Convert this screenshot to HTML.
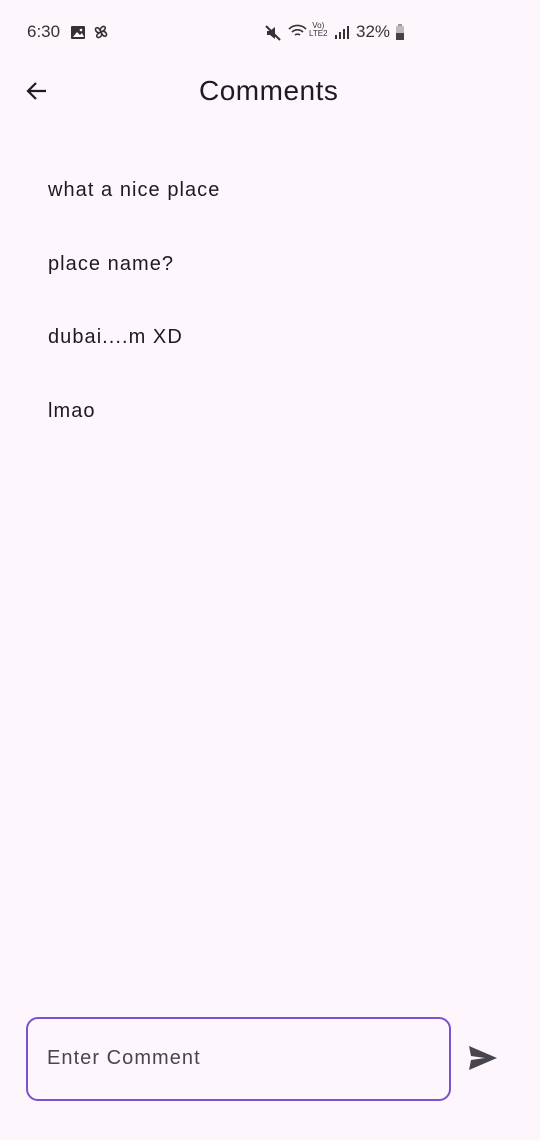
<!DOCTYPE html>
<html><head><meta charset="utf-8"><style>
body{margin:0;width:540px;height:1140px;background:#fdf6fc;font-family:"Liberation Sans",sans-serif;position:relative;overflow:hidden;color:#1d1b20}
.t{position:absolute;white-space:nowrap}
.c{font-size:20px;letter-spacing:1.05px}
</style></head><body>
<div class="t" style="left:27px;top:22px;font-size:17px;color:#333">6:30</div>
<svg class="t" style="left:70px;top:25px" width="16" height="15"><rect x="1" y="1" width="14" height="13" rx="1" fill="#333"/><path d="M3 12l4-5 3 3 2-2 2 4z" fill="#fff"/><circle cx="11" cy="5" r="1.3" fill="#fff"/></svg>
<svg class="t" style="left:92px;top:23px" width="18" height="18" fill="none" stroke="#333" stroke-width="1.6"><path d="M9 9C6 2 2 5 4 8s5 1 5 1zM9 9c7-3 4-7 1-5s-1 5-1 5zM9 9c3 7 7 4 5 1s-5-1-5-1zM9 9c-7 3-4 7-1 5s1-5 1-5z"/></svg>
<svg class="t" style="left:264px;top:24px" width="18" height="18"><path d="M3 7h3l5-4v12l-5-4H3z" fill="#333"/><path d="M2 2l14 14" stroke="#333" stroke-width="2"/></svg>
<svg class="t" style="left:288px;top:24px" width="20" height="16" fill="none" stroke="#333" stroke-width="1.6"><path d="M1 5a12 12 0 0 1 17 0M4 8a8 8 0 0 1 11 0M7 11a4 4 0 0 1 5 0"/></svg>
<div class="t" style="left:309px;top:22px;font-size:8px;line-height:8px;color:#333;text-align:center">Vo)<br>LTE2</div>
<svg class="t" style="left:334px;top:25px" width="16" height="15" fill="#333"><rect x="1" y="10" width="2" height="4"/><rect x="5" y="7" width="2" height="7"/><rect x="9" y="4" width="2" height="10"/><rect x="13" y="1" width="2" height="13"/></svg>
<div class="t" style="left:356px;top:22px;font-size:17px;color:#333">32%</div>
<svg class="t" style="left:395px;top:24px" width="10" height="17"><rect x="3" y="0" width="4" height="2" fill="#999"/><rect x="1" y="2" width="8" height="14" rx="1" fill="#bbb"/><rect x="1" y="9" width="8" height="7" fill="#444"/></svg>
<svg class="t" style="left:24px;top:78px" width="26" height="26" fill="none" stroke="#1d1b20" stroke-width="2.2"><path d="M22 13H4M12 5l-8 8 8 8"/></svg>
<div class="t" style="left:199px;top:75px;font-size:28px;letter-spacing:0.5px">Comments</div>
<div class="t c" style="left:48px;top:179px">what a nice place</div>
<div class="t c" style="left:48px;top:253px">place name?</div>
<div class="t c" style="left:48px;top:326px">dubai....m XD</div>
<div class="t c" style="left:48px;top:400px">lmao</div>
<div class="t" style="left:26px;top:1017px;width:421px;height:80px;border:2px solid #7e4fcf;border-radius:12px"></div>
<div class="t c" style="left:47px;top:1047px;color:#49454f">Enter Comment</div>
<svg class="t" style="left:468px;top:1045px" width="30" height="26"><path d="M1 1l28 12L1 25l2-10 14-2-14-2z" fill="#49454f"/></svg>
</body></html>
